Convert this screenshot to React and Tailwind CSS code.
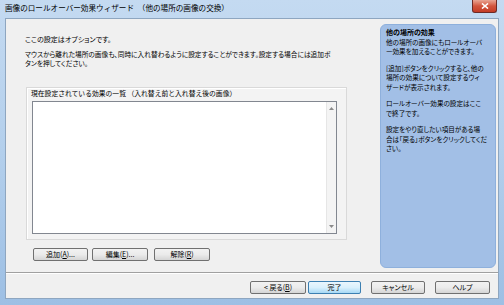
const jp = "[font-family:'Noto_Sans_CJK_JP','Noto_Sans_CJK_SC',sans-serif] [font-feature-settings:'palt']";

const WinButton = ({ children, className = "", primary = false }) => (
  <div
    className={`flex h-[13px] items-center justify-center rounded-[2px] border text-[7px] leading-none text-black ${
      primary
        ? "border-[#3c7fb1] bg-gradient-to-b from-[#eaf6fd] via-[#d9f0fc] to-[#a7d9f5]"
        : "border-[#707070] bg-gradient-to-b from-[#f2f2f2] via-[#ebebeb] to-[#d5d5d5]"
    } ${className}`}
  >
    {children}
  </div>
);

const Arrow = ({ up }) => (
  <svg width="5" height="3" viewBox="0 0 5 3">
    <path d={up ? "M0 3 L2.5 0 L5 3 Z" : "M0 0 L2.5 3 L5 0 Z"} fill="#8a8a8a" />
  </svg>
);

export default function App() {
  return (
    <div className={`flex h-[305px] w-[504px] flex-col overflow-hidden bg-gradient-to-b from-[#c4daf1] via-[#b3cfec] to-[#9dbfe4] ${jp}`}>
      {/* title bar */}
      <div className="flex h-[18px] shrink-0 items-start">
        <div className="pl-[5px] pt-[3px] text-[7.6px] leading-[10px] whitespace-nowrap text-black [font-feature-settings:normal]">
          画像のロールオーバー効果ウィザード　（他の場所の画像の交換）
        </div>
        <div className="ml-auto mr-[7px] flex h-[13px] w-[25px] items-center justify-center rounded-b-[3px] border border-t-0 border-[#6d2a26] bg-gradient-to-b from-[#e8a493] via-[#d2553e] to-[#c43c26]">
          <svg width="8" height="6" viewBox="0 0 8 6">
            <path d="M1 0.5 L7 5.5 M7 0.5 L1 5.5" stroke="#fff" strokeWidth="1.6" />
          </svg>
        </div>
      </div>

      {/* client area */}
      <div className="mx-[5px] mb-[6px] flex flex-1 flex-col border border-[#8ea6c0] bg-[#f0f0f0]">
        <div className="flex h-[253px] shrink-0">
          <div className="flex w-[373px] flex-col">
            <p className="pl-[19px] pt-[16px] text-[7px] leading-[9px] text-black">ここの設定はオプションです。</p>
            <p className="mt-[6px] pl-[19px] text-[6.7px] leading-[9px] whitespace-nowrap text-black">
              マウスから離れた場所の画像も、同時に入れ替わるように設定することができます。設定する場合には追加ボ
              <br />
              タンを押してください。
            </p>
            <div className="ml-[20px] mt-[19px] flex h-[153px] w-[321px] flex-col border border-[#d9d9d9] bg-[#f3f3f3] shadow-[inset_1px_1px_0_#fff]">
              <div className="pl-[4px] pt-[1px] text-[6.8px] leading-[9px] whitespace-nowrap text-black [font-feature-settings:normal]">
                現在設定されている効果の一覧 （入れ替え前と入れ替え後の画像）
              </div>
              <div className="ml-[5px] mt-[3px] flex h-[133px] w-[305px] border border-[#828790] bg-white">
                <div className="flex-1" />
                <div className="flex w-[10px] flex-col items-center justify-between border-l border-[#e6e6e6] bg-[#f4f4f4] py-[5px]">
                  <Arrow up />
                  <Arrow />
                </div>
              </div>
            </div>
            <div className="ml-[27px] mt-[8px] flex">
              <WinButton className="w-[55px]">
                追加(<u>A</u>)...
              </WinButton>
              <WinButton className="ml-[4px] w-[56px]">
                編集(<u>E</u>)...
              </WinButton>
              <WinButton className="ml-[6px] w-[56px]">
                解除(<u>R</u>)
              </WinButton>
            </div>
          </div>

          <div className="mb-[4px] ml-[1px] mt-[5px] flex w-[116px] flex-col rounded-[6px] border border-[#8eb0dc] bg-[#a2bfe6] px-[5px] pt-[3px] text-[6.6px] leading-[9.5px] whitespace-nowrap text-black">
            <div className="text-[7px] font-bold">他の場所の効果</div>
            <div>
              他の場所の画像にもロールオーバ
              <br />
              ー効果を加えることができます。
            </div>
            <div className="mt-[7px]">
              [追加]ボタンをクリックすると、他の
              <br />
              場所の効果について設定するウィ
              <br />
              ザードが表示されます。
            </div>
            <div className="mt-[7px]">
              ロールオーバー効果の設定はここ
              <br />
              で終了です。
            </div>
            <div className="mt-[7px]">
              設定をやり直したい項目がある場
              <br />
              合は「戻る」ボタンをクリックしてくだ
              <br />
              さい。
            </div>
          </div>
        </div>

        <div className="h-px bg-[#a0a0a0]" />
        <div className="h-px bg-white" />

        <div className="mt-[7px] flex pl-[244px]">
          <WinButton className="w-[56px]">
            &lt; 戻る(<u>B</u>)
          </WinButton>
          <WinButton primary className="ml-[2px] w-[53px]">
            完了
          </WinButton>
          <WinButton className="ml-[10px] w-[54px]">キャンセル</WinButton>
          <WinButton className="ml-[10px] w-[55px]">ヘルプ</WinButton>
        </div>
      </div>
    </div>
  );
}
